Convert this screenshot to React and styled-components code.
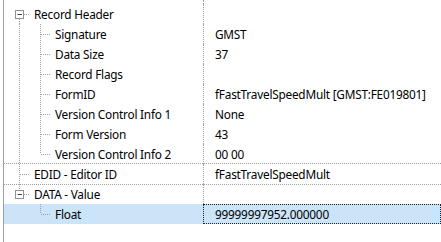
import React from "react";
import styled, { createGlobalStyle } from "styled-components";

const GlobalStyle = createGlobalStyle`
  html, body {
    margin: 0;
    padding: 0;
    background: #ffffff;
  }
  body {
    font-family: "Noto Sans", "Open Sans", sans-serif;
    font-size: 11.8px;
    letter-spacing: -0.22px;
    color: #000000;
  }
`;

const records = [
  { name: "Record Header", guides: ["openFirst"] },
  { name: "Signature", value: "GMST", guides: ["pipe", "tee"] },
  { name: "Data Size", value: "37", guides: ["pipe", "tee"] },
  { name: "Record Flags", value: "", guides: ["pipe", "tee"] },
  { name: "FormID", value: "fFastTravelSpeedMult [GMST:FE019801]", guides: ["pipe", "tee"] },
  { name: "Version Control Info 1", value: "None", guides: ["pipe", "tee"] },
  { name: "Form Version", value: "43", guides: ["pipe", "tee"] },
  { name: "Version Control Info 2", value: "00 00", guides: ["pipe", "elbow"] },
  { name: "EDID - Editor ID", value: "fFastTravelSpeedMult", guides: ["tee"], ruled: true },
  { name: "DATA - Value", value: "", guides: ["openLast"] },
  { name: "Float", value: "99999997952.000000", guides: ["blank", "elbow"], selected: true },
];

// tree guide drawing: 21x20 cell, line runs through x = 10.5
const Guide = ({ kind }) => {
  const dot = { stroke: "#a0a0a0", strokeWidth: 1, strokeDasharray: "1 1" };
  const open = kind === "openFirst" || kind === "openLast";
  return (
    <svg width="21" height="20" viewBox="0 0 21 20" style={{ flex: "none", display: "block" }}>
      {(kind === "pipe" || kind === "tee") && <line x1="10.5" y1="0" x2="10.5" y2="20" {...dot} />}
      {kind === "elbow" && <line x1="10.5" y1="0" x2="10.5" y2="10" {...dot} />}
      {(kind === "tee" || kind === "elbow") && <line x1="11" y1="10.5" x2="23" y2="10.5" {...dot} />}
      {open && (
        <>
          {kind === "openFirst" && <line x1="10.5" y1="15" x2="10.5" y2="20" {...dot} />}
          {kind === "openLast" && <line x1="10.5" y1="0" x2="10.5" y2="6" {...dot} />}
          <line x1="15" y1="10.5" x2="23" y2="10.5" {...dot} />
          <rect x="6.5" y="6.5" width="8" height="8" fill="#ffffff" stroke="#919191" />
          <line x1="8.5" y1="10.5" x2="13" y2="10.5" stroke="#404040" strokeWidth="1" />
        </>
      )}
    </svg>
  );
};

export default function App() {
  return (
    <>
      <GlobalStyle />
      <Panel>
        <TopGap>
          <NameCell />
          <ValueCell />
        </TopGap>
        {records.map((r) => (
          <Row key={r.name} $selected={r.selected} $ruled={r.ruled}>
            <NameCell>
              <Guides>
                {r.guides.map((g, i) => (
                  <Guide key={i} kind={g} />
                ))}
              </Guides>
              <Label>{r.name}</Label>
            </NameCell>
            <ValueCell $focused={r.selected}>{r.value}</ValueCell>
          </Row>
        ))}
      </Panel>
    </>
  );
}

const Panel = styled.div`
  margin-left: 3px;
  height: 242px;
  border-left: 1px solid #a0a0a0;
  display: flex;
  flex-direction: column;
  overflow: hidden;
`;

const TopGap = styled.div`
  display: grid;
  grid-template-columns: 199px 1fr;
  height: 4px;
`;

const Row = styled.div`
  display: grid;
  grid-template-columns: 199px 1fr;
  height: 20px;
  background: ${(p) => (p.$selected ? "#cce4f7" : "transparent")};
  border-top: ${(p) => (p.$ruled ? "1px dotted #a0a0a0" : "none")};
  border-bottom: ${(p) => (p.$ruled ? "1px dotted #a0a0a0" : "none")};
  margin: ${(p) => (p.$ruled ? "-1px 0" : "0")};
`;

const NameCell = styled.div`
  display: flex;
  align-items: center;
  padding-left: 5px;
  min-width: 0;
  white-space: nowrap;
`;

const Guides = styled.div`
  display: flex;
  align-self: stretch;
  align-items: center;
`;

const Label = styled.span`
  margin-left: 4px;
  line-height: 20px;
`;

const ValueCell = styled.div`
  display: flex;
  align-items: center;
  padding-left: 11px;
  white-space: nowrap;
  overflow: hidden;
  border-left: 1px dotted #a0a0a0;
  outline: ${(p) => (p.$focused ? "1px dotted #202020" : "none")};
  outline-offset: -1px;
`;
